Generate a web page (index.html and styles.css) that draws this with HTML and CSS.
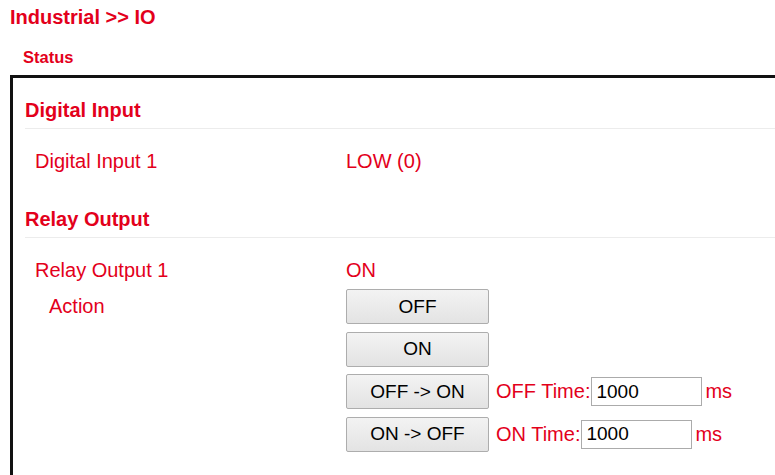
FILE: index.html
```html
<!DOCTYPE html>
<html>
<head>
<meta charset="utf-8">
<title>Industrial IO</title>
<link rel="stylesheet" href="styles.css">
</head>
<body>
<h1 class="page-title">Industrial &gt;&gt; IO</h1>
<div class="tab">Status</div>
<div class="panel">
  <div class="section">
    <h2 class="sec-title">Digital Input</h2>
    <div class="row row-first">
      <div class="label">Digital Input 1</div>
      <div class="value">LOW (0)</div>
    </div>
  </div>
  <div class="section section-relay">
    <h2 class="sec-title">Relay Output</h2>
    <div class="row row-first">
      <div class="label">Relay Output 1</div>
      <div class="value">ON</div>
    </div>
    <div class="row row-action">
      <div class="label label-sub">Action</div>
      <div class="actions">
        <div class="act"><button class="btn">OFF</button></div>
        <div class="act"><button class="btn">ON</button></div>
        <div class="act">
          <button class="btn">OFF -&gt; ON</button>
          <span class="tlabel">OFF Time:</span><input class="tinput" type="text" value="1000"><span class="unit">ms</span>
        </div>
        <div class="act">
          <button class="btn">ON -&gt; OFF</button>
          <span class="tlabel">ON Time:</span><input class="tinput" type="text" value="1000"><span class="unit">ms</span>
        </div>
      </div>
    </div>
  </div>
</div>
</body>
</html>
```
FILE: styles.css
```css
html, body {
  margin: 0;
  padding: 0;
  background: #ffffff;
  overflow: hidden;
}
body {
  font-family: "Liberation Sans", Arial, sans-serif;
  color: #e3001b;
  width: 775px;
  height: 475px;
}
.page-title {
  margin: 0;
  padding: 6px 0 0 10px;
  font-size: 20px;
  line-height: 23px;
  font-weight: bold;
}
.tab {
  margin: 0;
  padding: 18px 0 0 23px;
  font-size: 16.5px;
  line-height: 20px;
  font-weight: bold;
  height: 28px;
}
.panel {
  margin-left: 10px;
  border-top: 3px solid #111111;
  border-left: 3px solid #111111;
  padding: 0 0 40px 12px;
}
.sec-title {
  margin: 0;
  padding: 21px 0 6px 0;
  font-size: 20px;
  line-height: 23px;
  font-weight: bold;
  border-bottom: 1px solid #ececec;
}
.section-relay .sec-title {
  padding-top: 35px;
}
.row {
  display: flex;
  align-items: flex-start;
  font-size: 20px;
  line-height: 23px;
  padding-left: 10px;
}
.row-first {
  margin-top: 21px;
}
.row-action {
  margin-top: 7px;
}
.label {
  width: 311px;
  flex: none;
}
.label-sub {
  padding-left: 14px;
  padding-top: 6px;
  box-sizing: border-box;
}
.actions {
  display: flex;
  flex-direction: column;
  gap: 7.5px;
}
.act {
  display: flex;
  align-items: center;
  height: 35px;
}
.btn {
  width: 143px;
  height: 35px;
  margin: 0;
  padding: 0;
  border: 1px solid #adadad;
  border-radius: 2px;
  background: linear-gradient(#f3f3f3, #e3e3e3);
  font-family: "Liberation Sans", Arial, sans-serif;
  font-size: 19px;
  color: #000;
  flex: none;
}
.tlabel {
  margin-left: 7px;
  font-size: 20px;
}
.tinput {
  width: 111px;
  height: 29px;
  box-sizing: border-box;
  margin: 0 0 0 1px;
  padding: 0 4px;
  border: 1px solid #ababab;
  font-family: "Liberation Sans", Arial, sans-serif;
  font-size: 19px;
  color: #000;
  background: #fff;
  outline: none;
}
.unit {
  margin-left: 3px;
  font-size: 20px;
}
```
